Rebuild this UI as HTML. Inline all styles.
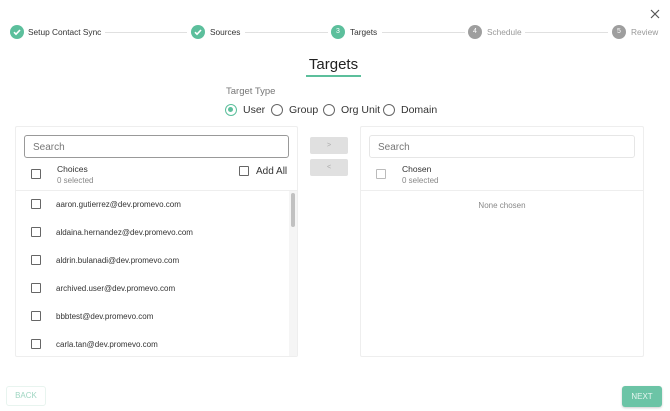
<!DOCTYPE html>
<html><head><meta charset="utf-8"><style>
*{box-sizing:border-box;margin:0;padding:0}
body{width:670px;height:411px;background:#fff;font-family:"Liberation Sans",Arial,sans-serif;position:relative;overflow:hidden;color:#333}
.a{position:absolute}
.sc{position:absolute;width:14px;height:14px;border-radius:50%;top:25px;color:#fff;font-size:7px;text-align:center;line-height:14px}
.g{background:#5cbf9c}.gr{background:#9e9e9e}
.st{position:absolute;top:27px;font-size:8.3px;line-height:10px}
.ln{position:absolute;top:32px;height:1px;background:#e0e0e0}
.rad{position:absolute;top:104px;width:12px;height:12px;border:1.5px solid #666;border-radius:50%}
.rl{position:absolute;top:104px;font-size:10.5px;line-height:12px;color:#333}
.cb{position:absolute;width:10px;height:10px;border:1.3px solid #666;border-radius:1px}
.panel{position:absolute;top:126px;border:1px solid #eee;border-radius:2px;height:231px}
.search{position:absolute;height:23px;border-radius:3px;font-size:10px;color:#777;padding:6px 8px;line-height:11px}
.em{position:absolute;left:56px;font-size:8px;color:#333;line-height:9px}
.btn{position:absolute;left:310px;width:38px;height:17px;background:#e0e0e0;border-radius:2px;color:#aaa;font-size:7px;text-align:center;line-height:17px}
</style></head><body>
<div class="sc g" style="left:10px"><svg width="14" height="14"><path d="M4 7.2l2 2 4-4.2" fill="none" stroke="#fff" stroke-width="1.6"/></svg></div>
<div class="st" style="left:28px">Setup Contact Sync</div>
<div class="ln" style="left:105px;width:82px"></div>
<div class="sc g" style="left:191px"><svg width="14" height="14"><path d="M4 7.2l2 2 4-4.2" fill="none" stroke="#fff" stroke-width="1.6"/></svg></div>
<div class="st" style="left:210px">Sources</div>
<div class="ln" style="left:245px;width:83px"></div>
<div class="sc g" style="left:331px">3</div>
<div class="st" style="left:350px">Targets</div>
<div class="ln" style="left:382px;width:83px"></div>
<div class="sc gr" style="left:468px">4</div>
<div class="st" style="left:487px;color:#999">Schedule</div>
<div class="ln" style="left:525px;width:83px"></div>
<div class="sc gr" style="left:612px">5</div>
<div class="st" style="left:631px;color:#999">Review</div>
<svg class="a" style="left:650px;top:9px" width="10" height="10"><path d="M1 1L9 9M9 1L1 9" stroke="#555" stroke-width="1.2"/></svg>

<div class="a" style="left:306px;top:56px;width:55px;text-align:center;font-size:15px;color:#222;line-height:17px">Targets</div>
<div class="a" style="left:306px;top:75px;width:55px;height:1.5px;background:#5cbf9c"></div>
<div class="a" style="left:226px;top:86px;font-size:9.5px;color:#777">Target Type</div>
<div class="rad" style="left:225px;border-color:#5cbf9c"><div class="a" style="left:2px;top:2px;width:5px;height:5px;border-radius:50%;background:#5cbf9c"></div></div>
<div class="rl" style="left:243px">User</div>
<div class="rad" style="left:271px"></div><div class="rl" style="left:289px">Group</div>
<div class="rad" style="left:323px"></div><div class="rl" style="left:341px">Org Unit</div>
<div class="rad" style="left:383px"></div><div class="rl" style="left:401px">Domain</div>

<div class="panel" style="left:15px;width:283px"></div>
<div class="search" style="left:24px;top:135px;width:265px;border:1px solid #999">Search</div>
<div class="cb" style="left:31px;top:169px"></div>
<div class="a" style="left:57px;top:164px;font-size:8.5px;color:#333">Choices</div>
<div class="a" style="left:57px;top:176px;font-size:8px;color:#888">0 selected</div>
<div class="cb" style="left:239px;top:166px"></div>
<div class="a" style="left:256px;top:166px;font-size:10px;color:#333">Add All</div>
<div class="a" style="left:16px;top:190px;width:281px;height:1px;background:#eee"></div>
<div class="a" style="left:289px;top:191px;width:8px;height:165px;background:#f5f5f5"></div>
<div class="a" style="left:291px;top:193px;width:4px;height:34px;background:#c1c1c1;border-radius:2px"></div>
<div class="cb" style="left:31px;top:199px"></div><div class="em" style="top:200px">aaron.gutierrez@dev.promevo.com</div>
<div class="cb" style="left:31px;top:227px"></div><div class="em" style="top:228px">aldaina.hernandez@dev.promevo.com</div>
<div class="cb" style="left:31px;top:255px"></div><div class="em" style="top:256px">aldrin.bulanadi@dev.promevo.com</div>
<div class="cb" style="left:31px;top:283px"></div><div class="em" style="top:284px">archived.user@dev.promevo.com</div>
<div class="cb" style="left:31px;top:311px"></div><div class="em" style="top:312px">bbbtest@dev.promevo.com</div>
<div class="cb" style="left:31px;top:339px"></div><div class="em" style="top:340px">carla.tan@dev.promevo.com</div>

<div class="btn" style="top:137px">&gt;</div>
<div class="btn" style="top:159px">&lt;</div>

<div class="panel" style="left:360px;width:284px"></div>
<div class="search" style="left:369px;top:135px;width:266px;border:1px solid #e6e6e6">Search</div>
<div class="cb" style="left:376px;top:169px;border-color:#bbb"></div>
<div class="a" style="left:402px;top:164px;font-size:8.5px;color:#333">Chosen</div>
<div class="a" style="left:402px;top:176px;font-size:8px;color:#888">0 selected</div>
<div class="a" style="left:361px;top:190px;width:282px;height:1px;background:#eee"></div>
<div class="a" style="left:361px;top:201px;width:282px;text-align:center;font-size:8px;color:#888">None chosen</div>

<div class="a" style="left:6px;top:386px;width:40px;height:20px;border:1px solid #e8f4ef;border-radius:3px;color:#9fd6c2;font-size:8px;text-align:center;line-height:18px">BACK</div>
<div class="a" style="left:622px;top:386px;width:40px;height:21px;background:#6cc4a6;border-radius:3px;color:#e6f6f0;font-size:8px;text-align:center;line-height:21px;box-shadow:0 1px 2px rgba(0,0,0,.2)">NEXT</div>
</body></html>
